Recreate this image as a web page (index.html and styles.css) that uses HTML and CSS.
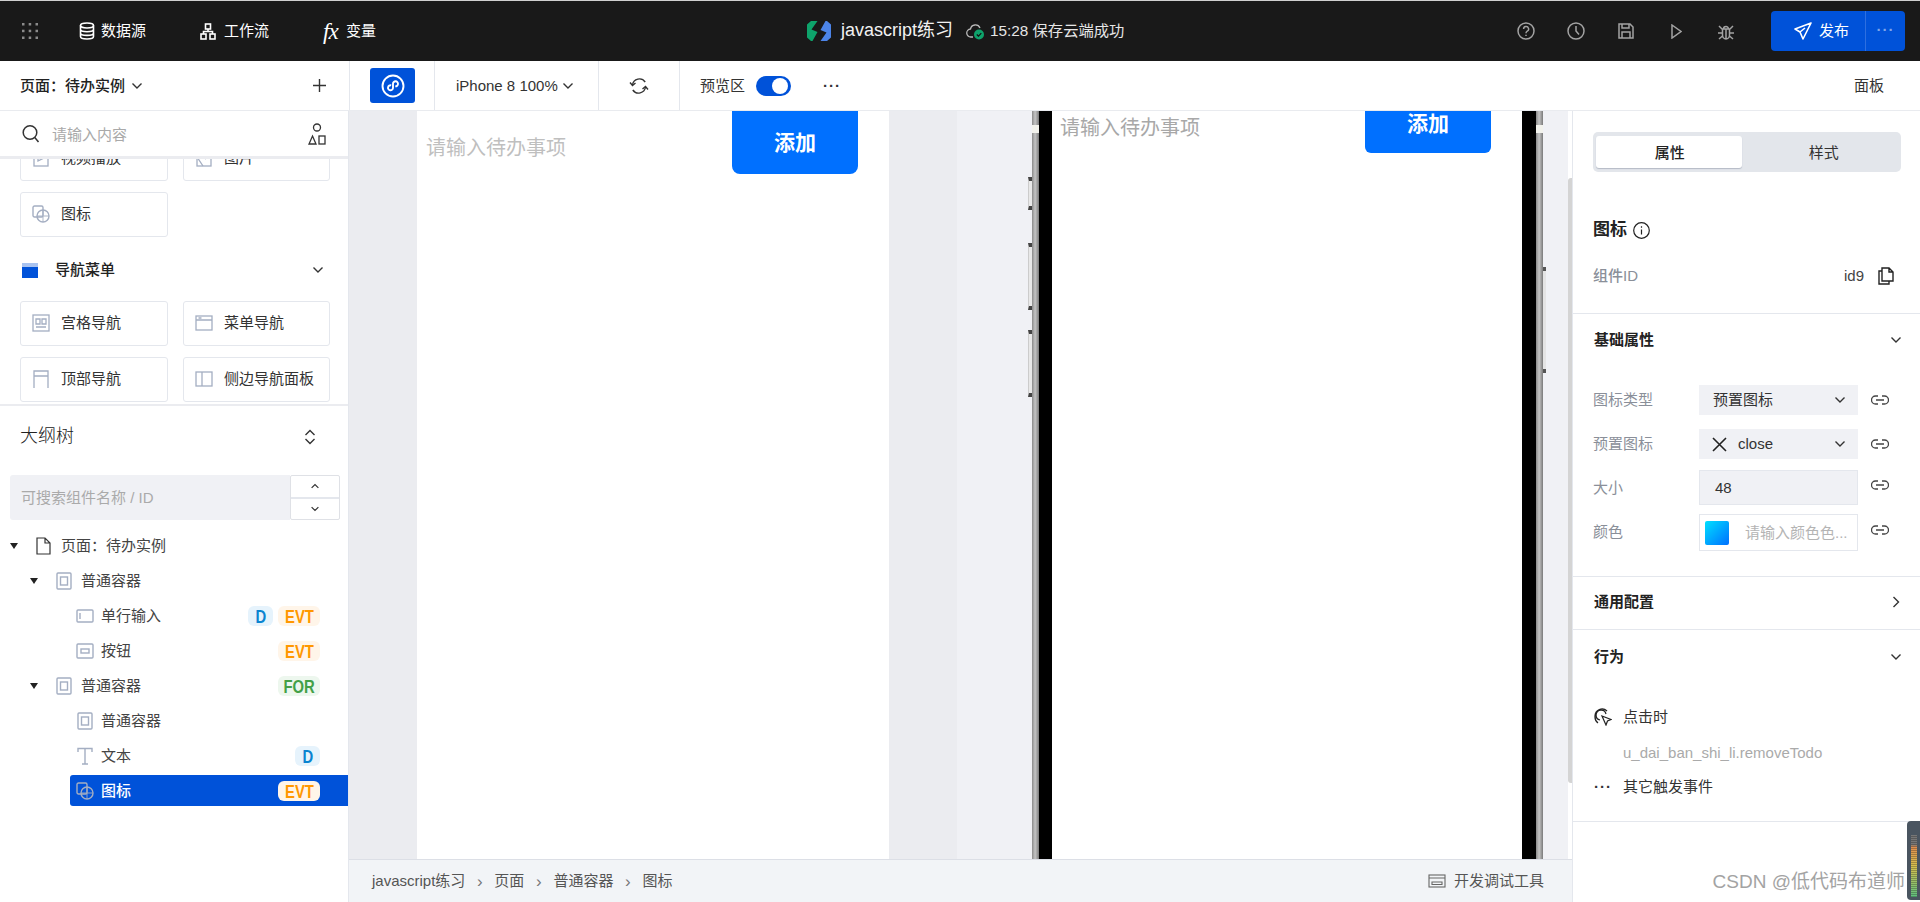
FILE: index.html
```html
<!DOCTYPE html>
<html>
<head>
<meta charset="utf-8">
<title>javascript练习</title>
<link rel="stylesheet" href="styles.css">
</head>
<body>
<svg class="sprite" width="0" height="0">
<symbol id="i-box" viewBox="0 0 16 18"><rect x="1" y="1" width="14" height="16" rx="1"/><rect x="4.5" y="5" width="7" height="8"/></symbol>
<symbol id="i-icon" viewBox="0 0 18 18"><rect x="1" y="1" width="10" height="11" rx="1.5"/><circle cx="11" cy="11" r="6"/><path d="M5 11h12M11 5v12" opacity=".6"/></symbol>
<symbol id="i-input" viewBox="0 0 18 14"><rect x="1" y="1" width="16" height="12" rx="1"/><path d="M4 4v6"/></symbol>
<symbol id="i-btn" viewBox="0 0 18 16"><rect x="1" y="1" width="16" height="14" rx="1"/><rect x="5" y="6" width="8" height="4"/></symbol>
<symbol id="i-text" viewBox="0 0 18 18"><path d="M2 5V1.500h14V5M9 1.500V17M6 17h6"/></symbol>
<symbol id="i-link" viewBox="0 0 18 10"><path d="M7 1H4.500a4 4 0 0 0 0 8H7M11 1h2.500a4 4 0 0 1 0 8H11M5 5h8"/></symbol>
<symbol id="i-down" viewBox="0 0 12 8"><path d="M1.500 1.500 6 6l4.500-4.500"/></symbol>
</svg>

<header class="topbar">
  <div class="top-left">
    <svg class="grid-ic" width="16" height="16" viewBox="0 0 16 16" fill="#8a8a8a"><rect x="0" y="0" width="2.500" height="2.500"/><rect x="6.700" y="0" width="2.500" height="2.500"/><rect x="13.500" y="0" width="2.500" height="2.500"/><rect x="0" y="6.700" width="2.500" height="2.500"/><rect x="6.700" y="6.700" width="2.500" height="2.500"/><rect x="13.500" y="6.700" width="2.500" height="2.500"/><rect x="0" y="13.500" width="2.500" height="2.500"/><rect x="6.700" y="13.500" width="2.500" height="2.500"/><rect x="13.500" y="13.500" width="2.500" height="2.500"/></svg>
    <a class="nav nav-data"><svg width="16" height="18" viewBox="0 0 16 18" fill="none" stroke="#fff" stroke-width="1.600"><ellipse cx="8" cy="3.500" rx="6.500" ry="2.500"/><path d="M1.500 3.500v11c0 1.400 2.900 2.500 6.500 2.500s6.500-1.100 6.500-2.500v-11M1.500 7.200c0 1.400 2.900 2.500 6.500 2.500s6.500-1.100 6.500-2.500M1.500 10.900c0 1.400 2.900 2.500 6.500 2.500s6.500-1.100 6.500-2.500"/></svg>数据源</a>
    <a class="nav nav-flow"><svg width="16" height="17" viewBox="0 0 16 17" fill="none" stroke="#fff" stroke-width="1.600"><rect x="5.500" y="1" width="5" height="5"/><rect x="1" y="11" width="5" height="5"/><rect x="10" y="11" width="5" height="5"/><path d="M8 6v2.500M3.500 11V8.500h9V11"/></svg>工作流</a>
    <a class="nav nav-var"><i class="fx">fx</i>变量</a>
  </div>
  <div class="top-center">
    <svg class="logo" width="24" height="20" viewBox="0 0 24 20"><path d="M4 0h6.500L4.500 8.500l6 2.500-5 9H4l-4-3.500V3.500z" fill="#0ea36b"/><path d="M20 20h-6.500l6-8.500-6-2.500 5-9H20l4 3.500v13z" fill="#4c84e8"/></svg>
    <span class="app-name">javascript练习</span>
    <svg class="cloud" width="18" height="19" viewBox="0 0 18 19" fill="none"><path d="M7 16H5a4 4 0 0 1-.5-8A5 5 0 0 1 14 7" stroke="#bbb" stroke-width="1.300"/><circle cx="13" cy="13.500" r="5" fill="#0ea36b"/><path d="M10.800 13.500l1.700 1.700 2.800-3" stroke="#111" stroke-width="1.200"/></svg>
    <span class="save-state">15:28 保存云端成功</span>
  </div>
  <div class="top-right">
    <span class="act"><svg width="18" height="18" viewBox="0 0 18 18" fill="none" stroke="#a3a3a3" stroke-width="1.500"><circle cx="9" cy="9" r="8"/><path d="M6.600 7a2.500 2.500 0 1 1 3.700 2.200c-.9.500-1.300 1-1.300 2"/><path d="M9 12.700v1.300"/></svg></span>
    <span class="act"><svg width="18" height="18" viewBox="0 0 18 18" fill="none" stroke="#a3a3a3" stroke-width="1.500"><circle cx="9" cy="9" r="8"/><path d="M9 4v5l3 3.500"/></svg></span>
    <span class="act"><svg width="16" height="16" viewBox="0 0 16 16" fill="none" stroke="#a3a3a3" stroke-width="1.500"><path d="M1 1h11l3 3v11H1z"/><path d="M4 1v4h7V1M4 15V9h8v6"/></svg></span>
    <span class="act"><svg width="11" height="15" viewBox="0 0 11 15" fill="none" stroke="#a3a3a3" stroke-width="1.500"><path d="M1 1l9 6.500L1 14z"/></svg></span>
    <span class="act"><svg width="16" height="17" viewBox="0 0 16 17" fill="none" stroke="#a3a3a3" stroke-width="1.500"><path d="M4.500 6h7v6a3.500 4 0 0 1-7 0zM5.500 6a2.500 2.500 0 0 1 5 0M8 6v10M1 3l3.500 3.500M15 3l-3.500 3.500M0 10h4.500M16 10h-4.500M1 16l3.500-3M15 16l-3.500-3"/></svg></span>
    <div class="publish">
      <a class="pub-main"><svg width="18" height="18" viewBox="0 0 18 18" fill="none" stroke="#fff" stroke-width="1.600" stroke-linejoin="round"><path d="M17 1 1 7l5 3 3 7zM6 10l5-4"/></svg>发布</a>
      <a class="pub-more">···</a>
    </div>
  </div>
</header>

<div class="toolbar">
  <div class="tb-page">
    <strong>页面：待办实例</strong>
    <svg class="chev" width="12" height="8"><use href="#i-down"/></svg>
    <svg class="plus" width="13" height="13" viewBox="0 0 13 13"><path d="M6.500 0v13M0 6.500h13"/></svg>
  </div>
  <div class="tb-cell tb-mini">
    <span class="mini-btn"><svg width="24" height="24" viewBox="0 0 24 24" fill="none" stroke="#fff" stroke-width="1.900"><circle cx="12" cy="12" r="10.500"/><path d="M10.200 11.400a2.500 2.500 0 1 0 1.800 2.400V9.800a2.500 2.500 0 1 1 2.300 2.500"/></svg></span>
  </div>
  <div class="tb-cell tb-device">iPhone 8 100%<svg class="chev" width="12" height="8"><use href="#i-down"/></svg></div>
  <div class="tb-cell tb-refresh"><svg width="20" height="18" viewBox="0 0 20 18" fill="none" stroke="#333" stroke-width="1.400"><path d="M3.500 8A7 7 0 0 1 16.200 5M16.500 10A7 7 0 0 1 3.800 13"/><path d="M1 5.500l2.500 3L6.500 6M19 12.500l-2.500-3L13.500 12"/></svg></div>
  <div class="tb-preview">预览区<span class="toggle"></span><span class="more">···</span></div>
  <div class="tb-panel">面板</div>
</div>

<div class="work">
  <aside class="left">
    <div class="search">
      <svg width="18" height="20" viewBox="0 0 18 20" fill="none" stroke="#333" stroke-width="1.500"><circle cx="8" cy="8.500" r="6.800"/><path d="M12.800 13.500 16.500 18"/></svg>
      <span class="ph">请输入内容</span>
      <svg class="shapes" width="18" height="22" viewBox="0 0 18 22" fill="none" stroke="#333" stroke-width="1.300"><circle cx="9" cy="4.500" r="3.500"/><path d="M4.500 13 8 21H1z"/><rect x="11" y="13" width="6" height="8"/></svg>
    </div>
    <div class="palette">
      <div class="cards cards-top">
        <a class="card"><svg class="cic" width="16" height="18" viewBox="0 0 16 18"><rect x="1" y="1" width="14" height="16"/><path d="M5 6l6 3-6 3z"/></svg>视频播放</a>
        <a class="card"><svg class="cic" width="16" height="18" viewBox="0 0 16 18"><rect x="1" y="1" width="14" height="16"/><path d="M1 8l6 9M9 10l6-4"/></svg>图片</a>
        <a class="card"><svg class="cic" width="18" height="18"><use href="#i-icon"/></svg>图标</a>
      </div>
      <div class="group"><span class="group-ic"></span><strong>导航菜单</strong><svg class="chev" width="12" height="8"><use href="#i-down"/></svg></div>
      <div class="cards">
        <a class="card"><svg class="cic" width="18" height="18" viewBox="0 0 18 18"><rect x="1" y="1" width="16" height="16"/><path d="M4 5h4v5H4zM10 5h4v5h-4zM4 13h10"/></svg>宫格导航</a>
        <a class="card"><svg class="cic" width="18" height="16" viewBox="0 0 18 16"><rect x="1" y="1" width="16" height="14"/><path d="M1 5h16M3.500 3h3"/></svg>菜单导航</a>
        <a class="card"><svg class="cic" width="16" height="18" viewBox="0 0 16 18"><path d="M1 18V1h14v17M1 6h14"/></svg>顶部导航</a>
        <a class="card"><svg class="cic" width="18" height="16" viewBox="0 0 18 16"><rect x="1" y="1" width="16" height="14"/><path d="M7 1v14"/></svg>侧边导航面板</a>
      </div>
    </div>
    <div class="outline">
      <div class="outline-head"><span>大纲树</span>
        <svg class="updown" width="12" height="16" viewBox="0 0 12 16"><path d="M1.500 6 6 1.500 10.500 6M1.500 10 6 14.500 10.500 10"/></svg>
      </div>
      <div class="find">
        <div class="find-input">可搜索组件名称 / ID</div>
        <div class="stepper">
          <span><svg width="10" height="6" viewBox="0 0 12 8"><path d="M1.500 6.500 6 2l4.500 4.500"/></svg></span>
          <span><svg width="10" height="6"  viewBox="0 0 12 8"><path d="M1.500 1.500 6 6l4.500-4.500"/></svg></span>
        </div>
      </div>
      <div class="tree">
        <div class="row l0"><i class="caret"></i><svg class="ic doc" width="15" height="18" viewBox="0 0 15 18"><path d="M1 1h8l5 5v11H1zM9 1v5h5"/></svg>页面：待办实例</div>
        <div class="row l1"><i class="caret"></i><svg class="ic" width="16" height="18"><use href="#i-box"/></svg>普通容器</div>
        <div class="row l2"><svg class="ic" width="18" height="14"><use href="#i-input"/></svg>单行输入<span class="tags"><b class="tag d"><span>D</span></b><b class="tag evt"><span>EVT</span></b></span></div>
        <div class="row l2"><svg class="ic" width="18" height="16"><use href="#i-btn"/></svg>按钮<span class="tags"><b class="tag evt"><span>EVT</span></b></span></div>
        <div class="row l1"><i class="caret"></i><svg class="ic" width="16" height="18"><use href="#i-box"/></svg>普通容器<span class="tags"><b class="tag for"><span>FOR</span></b></span></div>
        <div class="row l2"><svg class="ic" width="16" height="18"><use href="#i-box"/></svg>普通容器</div>
        <div class="row l2"><svg class="ic" width="18" height="18"><use href="#i-text"/></svg>文本<span class="tags"><b class="tag d"><span>D</span></b></span></div>
        <div class="row l2 sel"><svg class="ic" width="18" height="18"><use href="#i-icon"/></svg>图标<span class="tags"><b class="tag evt"><span>EVT</span></b></span></div>
      </div>
    </div>
  </aside>

  <main class="center">
    <div class="canvas">
      <div class="gut gut-a"></div>
      <div class="screen screen-a">
        <span class="todo-ph">请输入待办事项</span>
        <a class="add">添加</a>
      </div>
      <div class="gut gut-a gut-b"></div>
      <div class="gut gut-c"></div>
      <div class="keys keys-l"><i></i><i></i><i></i></div>
      <div class="bezel"><span class="glint"></span></div>
      <div class="black"></div>
      <div class="screen screen-b">
        <span class="todo-ph dim">请输入待办事项</span>
        <a class="add add-b">添加</a>
      </div>
      <div class="black black-r"></div>
      <div class="bezel bezel-r"><span class="glint"></span></div>
      <div class="keys keys-r"><i></i></div>
      <div class="gut gut-d"></div>
      <div class="scroll"><i></i></div>
    </div>
    <footer class="crumbs">
      <span class="cr">javascript练习</span><em>›</em><span class="cr">页面</span><em>›</em><span class="cr">普通容器</span><em>›</em><span class="cr">图标</span>
      <span class="devtool"><svg width="18" height="14" viewBox="0 0 18 14" fill="none" stroke="#666" stroke-width="1.100"><rect x="1" y="1" width="16" height="12"/><path d="M1 4h16M4 8h10v2.500H4z"/></svg>开发调试工具</span>
    </footer>
  </main>

  <aside class="props">
    <div class="tabs"><span class="tab on">属性</span><span class="tab">样式</span></div>
    <div class="title"><strong>图标</strong><svg width="17" height="17" viewBox="0 0 17 17" fill="none" stroke="#222" stroke-width="1.200"><circle cx="8.500" cy="8.500" r="7.800"/><path d="M8.500 7.500v5M8.500 4.300v1.500"/></svg></div>
    <div class="comp-id"><span class="muted">组件ID</span><span class="id">id9</span>
      <svg width="16" height="18" viewBox="0 0 16 18" fill="none" stroke="#222" stroke-width="1.400"><path d="M4 1h7l4 4v9H4zM11 1v4h4M4 4H1v13h10v-3"/></svg>
    </div>
    <div class="sec-head sec-line"><strong>基础属性</strong><svg class="chev" width="12" height="8"><use href="#i-down"/></svg></div>
    <div class="form">
      <div class="prow r-a"><label>图标类型</label><div class="ctl"><span>预置图标</span><svg class="chev" width="12" height="8"><use href="#i-down"/></svg></div><svg class="link" width="18" height="10"><use href="#i-link"/></svg></div>
      <div class="prow r-b"><label>预置图标</label><div class="ctl"><svg class="x" width="15" height="15" viewBox="0 0 15 15"><path d="M1 1l13 13M14 1 1 14"/></svg><span>close</span><svg class="chev" width="12" height="8"><use href="#i-down"/></svg></div><svg class="link" width="18" height="10"><use href="#i-link"/></svg></div>
      <div class="prow r-c"><label>大小</label><div class="ctl num"><span>48</span></div><svg class="link" width="18" height="10"><use href="#i-link"/></svg></div>
      <div class="prow r-d"><label>颜色</label><div class="ctl color"><i class="swatch"></i><span>请输入颜色色...</span></div><svg class="link" width="18" height="10"><use href="#i-link"/></svg></div>
    </div>
    <div class="sec-head sec-line sec-top"><strong>通用配置</strong><svg class="chev right" width="8" height="12" viewBox="0 0 8 12"><path d="M1.500 1 6.500 6l-5 5"/></svg></div>
    <div class="sec-head sec-act"><strong>行为</strong><svg class="chev" width="12" height="8"><use href="#i-down"/></svg></div>
    <div class="behave">
      <div class="ev"><svg width="18" height="18" viewBox="0 0 18 18" fill="none" stroke="#222" stroke-width="1.200"><path d="M8 8l9 3.500-3.500 1.500L12 17z"/><path d="M6 12a5 5 0 1 1 6-6M4 15A8 8 0 0 1 1 8a7 7 0 0 1 12-5"/></svg><span>点击时</span></div>
      <div class="ev-fn">u_dai_ban_shi_li.removeTodo</div>
      <div class="ev"><span class="ev-dots">···</span><span>其它触发事件</span></div>
    </div>
  </aside>
</div>

<div class="watermark">CSDN @低代码布道师</div>
<div class="meter"><i></i></div>
</body>
</html>
```

FILE: styles.css
```css
*{box-sizing:border-box;}
html,body{margin:0;padding:0;height:100%;}
body{
width:1920px;
height:902px;
overflow:hidden;
position:relative;
background:#fff;
color:#333;
font:15px/1.3 "Liberation Sans","Noto Sans CJK SC",sans-serif;
}
a{text-decoration:none;color:inherit;}
i,em{font-style:normal;}
.sprite{position:absolute;}
symbol{fill:none;stroke:#a4aec2;stroke-width:1.400;}
symbol#i-link{stroke:#444;stroke-width:1.300;}
symbol#i-down{stroke:#333;stroke-width:1.400;}

/* top bar */
.topbar{
height:61px;
border-top:1px solid #d0d0d0;
background:#191919;
color:#fff;
display:flex;
align-items:center;
}
.top-left{width:807px;display:flex;align-items:center;padding-left:22px;}
.nav{display:flex;align-items:center;gap:6px;}
.nav-data{margin-left:41px;}
.nav-flow{margin-left:54px;gap:8px;}
.nav-var{margin-left:54px;gap:7px;}
.fx{font:italic 23px/1 "Liberation Serif",serif;letter-spacing:-1px;width:16px;}
.top-center{display:flex;align-items:center;}
.app-name{font-size:18px;margin-left:10px;color:#f2f2f2;}
.cloud{margin-left:13px;}
.save-state{margin-left:6px;color:#e6e6e6;font-size:15.300px;}
.top-right{margin-left:auto;display:flex;align-items:center;}
.act{width:50px;display:flex;justify-content:center;}
.publish{
width:134px;
height:40px;
margin-right:15px;
margin-left:20px;
display:flex;
border-radius:4px;
background:#0052d9;
overflow:hidden;
}
.pub-main{width:95px;padding-left:7px;display:flex;align-items:center;justify-content:center;gap:7px;border-right:1px solid #2e6fe0;}
.pub-more{flex:1;text-align:center;line-height:38px;color:#7fa6ea;font-weight:bold;letter-spacing:1px;}

/* second bar */
.toolbar{height:50px;display:flex;align-items:center;border-bottom:1px solid #e9ebef;}
.tb-page{width:350px;height:100%;padding:0 23px 0 20px;display:flex;align-items:center;border-right:1px solid #e4e7ed;}
.tb-page strong{font-size:15px;font-weight:500;color:#222;}
.chev{fill:none;stroke:#333;stroke-width:1.400;}
.tb-page .chev{margin-left:6px;}
.plus{margin-left:auto;fill:none;stroke:#333;stroke-width:1.400;}
.tb-cell{height:100%;display:flex;align-items:center;border-right:1px solid #e4e7ed;}
.tb-mini{width:85px;padding-left:20px;}
.mini-btn{width:45px;height:35px;background:#0052d9;border-radius:3px;display:flex;align-items:center;justify-content:center;}
.tb-device{width:164px;padding-left:21px;gap:4px;}
.tb-refresh{width:81px;justify-content:center;}
.tb-preview{margin-left:20px;display:flex;align-items:center;}
.toggle{width:35px;height:20px;margin-left:11px;border-radius:10px;background:#0052d9;position:relative;}
.toggle:after{content:"";position:absolute;right:3px;top:2px;width:16px;height:16px;border-radius:50%;background:#fff;}
.more{margin-left:32px;font-weight:bold;letter-spacing:1px;}
.tb-panel{margin-left:auto;margin-right:36px;}

/* main area */
.work{height:791px;display:flex;}
.left{width:349px;border-right:1px solid #e4e7ed;flex:none;}
.search{height:48px;padding:0 22px 0 22px;display:flex;align-items:center;border-bottom:3px solid #ebecf0;}
.ph{margin-left:12px;margin-top:2px;color:#a9a9a9;}
.shapes{margin-left:auto;}
.palette{height:245px;overflow:hidden;padding:0 19px 0 20px;}
.cards{display:grid;grid-template-columns:148px 147px;column-gap:15px;row-gap:11px;}
.cards-top{margin-top:-23px;}
.card{height:45px;border:1px solid #e4e7ed;border-radius:3px;display:flex;align-items:center;padding:0 0 2px 11px;color:#333;}
.cic{width:18px;margin-right:11px;fill:none;stroke:#a4aec2;stroke-width:1.300;}
.group{height:64px;padding-top:2px;display:flex;align-items:center;}
.group strong{font-weight:500;color:#222;margin-left:17px;}
.group .chev{margin-left:auto;margin-right:5px;}
.group-ic{width:16px;height:15px;background:#0052d9;border-top:4px solid #a9c3f0;display:block;margin-left:2px;}

.outline{border-top:2px solid #ebecf0;}
.outline-head{height:62px;padding:0 32px 0 20px;display:flex;align-items:center;justify-content:space-between;font-size:18px;font-weight:300;color:#222;}
.updown{fill:none;stroke:#333;stroke-width:1.400;}
.find{margin:7px 8px 0 10px;display:flex;height:45px;}
.find-input{width:280px;background:#f0f1f5;border-radius:3px 0 0 3px;padding-left:11px;line-height:45px;color:#aaa;}
.stepper{flex:1;border:1px solid #dfe1e6;border-radius:2px;display:flex;flex-direction:column;}
.stepper span{flex:1;display:flex;align-items:center;justify-content:center;}
.stepper span + span{border-top:2px solid #e4e7ed;}
.stepper svg{fill:none;stroke:#333;stroke-width:1.600;}
.tree{margin-top:8px;}
.row{height:35px;display:flex;align-items:center;padding-right:28px;color:#444;}
.l0{padding-left:10px;}
.l1{padding-left:30px;}
.l2{padding-left:76px;}
.caret{width:0;height:0;border:4.500px solid transparent;border-top:6px solid #222;border-bottom:0;margin-right:18px;}
.ic{margin-right:9px;flex:none;}
.l2 .ic{width:18px;margin-right:7px;}
.doc{fill:none;stroke:#333;stroke-width:1.200;margin-right:10px;}
.tags{margin-left:auto;display:flex;gap:5px;}
.tag{height:20px;border-radius:6px;display:flex;justify-content:center;font:bold 19px/21px "Liberation Sans",sans-serif;}
.tag span{display:block;transform:scaleX(.78);}
.tag.d{width:25px;background:#e6f3fc;color:#0a84d0;}
.tag.evt{width:42px;background:#fff5e9;color:#ff9800;}
.tag.for{width:42px;background:#edf7ee;color:#43a047;}
.row.sel{
height:31px;
margin:2px 0;
margin-left:70px;
padding-left:6px;
background:#0052d9;
border-radius:3px 0 0 3px;
color:#fff;
font-weight:500;
}

.center{width:1223px;display:flex;flex-direction:column;}
.canvas{height:748px;display:flex;overflow:hidden;}
.gut{background:#f0f1f5;flex:none;}
.gut-a{width:68px;background:#ebecf0;}
.gut-c{width:71px;}
.gut-d{width:22px;}
.screen{background:#fff;display:flex;align-items:flex-start;flex:none;}
.screen-a{width:472px;padding:24px 31px 0 9px;}
.screen-b{width:470px;padding:4px 31px 0 8px;}
.todo-ph{font-size:20px;color:#bfbfbf;}
.todo-ph.dim{color:#a8a8a8;}
.add{
margin-left:auto;
margin-top:-24px;
width:126px;
height:63px;
background:#0070ff;
border-radius:0 0 8px 8px;
color:#fff;
font-size:21px;
font-weight:bold;
display:flex;
align-items:center;
justify-content:center;
}
.add-b{margin-top:-4px;height:42px;border-radius:0 0 6px 6px;align-items:flex-start;line-height:26px;}
.keys{width:4px;background:#f0f1f5;flex:none;display:flex;flex-direction:column;}
.keys i{display:block;background:#e8e8e8;border-left:1px solid #ccc;border-top:4px solid #444;border-bottom:4px solid #444;margin-bottom:33px;}
.keys-l{padding-top:66px;}
.keys-l i{height:33px;}
.keys-l i + i{height:67px;margin-bottom:20px;}
.keys-r{width:3px;padding-top:156px;}
.keys-r i{height:106px;background:#e4e4e4;border-left:0;border-top:4px solid #555;border-bottom:4px solid #555;}
.bezel{width:7px;background:linear-gradient(90deg,#8a8a8a,#c4c4c4 45%,#7a7a7a);padding-top:14px;flex:none;}
.glint{display:block;height:8px;background:#f2f2ec;}
.black{width:13px;background:#000;flex:none;}
.black-r{width:14px;}
.scroll{width:7px;background:#fff;flex:none;padding-top:67px;}
.scroll i{display:block;width:6px;height:605px;background:#d4d4d4;border-radius:3px;}
.crumbs{height:43px;background:#f2f4f7;border-top:1px solid #dcdfe6;display:flex;align-items:center;padding:0 28px 0 23px;color:#555;}
.crumbs em{width:29px;text-align:center;color:#777;font-size:17px;line-height:1;}
.devtool{margin-left:auto;display:flex;align-items:center;gap:8px;}

/* right panel */
.props{width:348px;border-left:1px solid #e4e7ed;flex:none;}
.tabs{margin:21px 19px 0 20px;height:40px;padding:4px 3px;background:#e3e6eb;border-radius:5px;display:flex;}
.tab{width:158px;padding-left:8px;text-align:center;line-height:33px;color:#333;}
.tab.on{width:147px;padding-left:2px;background:#fff;border-radius:3px;box-shadow:0 1px 1px #b4bac6;font-weight:500;color:#222;}
.title{margin:46px 0 0 20px;height:24px;display:flex;align-items:center;gap:6px;}
.title strong{font-size:17px;color:#222;}
.comp-id{margin-top:22px;padding:0 26px 0 20px;height:24px;display:flex;align-items:center;}
.muted{color:#8a8f99;font-weight:500;flex:1;}
.id{margin-right:14px;color:#444;}
.sec-head{height:52px;padding:0 18px 0 21px;display:flex;align-items:center;justify-content:space-between;}
.sec-head strong{color:#222;font-size:15px;}
.sec-line{border-bottom:1px solid #e4e7ed;height:53px;}
.comp-id + .sec-head{border-top:1px solid #e4e7ed;border-bottom:0;margin-top:25px;}
.sec-top{border-top:1px solid #e4e7ed;height:54px;padding-bottom:2px;}
.sec-act{height:53px;padding-top:1px;}
.chev.right{stroke:#333;margin-right:2px;}
.form{padding:19px 0 25px 20px;}
.prow{display:flex;align-items:center;}
.prow label{width:106px;color:#8a8f99;}
.ctl{width:159px;height:30px;background:#f0f1f5;display:flex;align-items:center;padding:0 12px 0 14px;color:#333;}
.ctl .chev{margin-left:auto;}
.x{fill:none;stroke:#222;stroke-width:1.600;margin-right:11px;margin-left:-1px;}
.link{margin-left:13px;}
.r-a{margin-bottom:14px;}
.r-b{margin-bottom:11px;}
.r-c{margin-bottom:9px;}
.r-c .ctl{height:35px;border:1px solid #e4e7ed;padding-left:15px;}
.r-c .link,.r-d .link{margin-top:-6px;}
.r-d label{margin-top:-2px;}
.r-d .ctl{height:37px;background:#fff;border:1px solid #e4e7ed;padding:0 5px;}
.swatch{width:24px;height:24px;border-radius:2px;background:linear-gradient(135deg,#00e0ff,#0070ff);margin-right:16px;flex:none;}
.r-d .ctl span{color:#b4b4b4;white-space:nowrap;}
.behave{padding:22px 0 22px 21px;border-bottom:1px solid #e4e7ed;}
.ev{height:24px;display:flex;align-items:center;color:#333;}
.ev span:last-child{margin-left:11px;}
.ev svg{flex:none;}
.ev-dots{width:18px;font-weight:bold;letter-spacing:1px;}
.ev-fn{margin:12px 0 10px 29px;height:24px;line-height:24px;color:#aaa;}

/* overlays */
.watermark{position:absolute;right:15px;bottom:7px;font-size:19px;color:#a3a3a3;}
.meter{
position:absolute;
right:0;
bottom:2px;
width:13px;
height:79px;
background:#4a5560;
border-radius:4px 0 0 4px;
padding:14px 3px 3px 4px;
}
.meter i{display:block;height:100%;background:repeating-linear-gradient(180deg,transparent 0 1px,rgba(0,0,0,.25) 1px 2px),linear-gradient(180deg,#777 0,#777 15%,#e09050 20%,#d8c050 50%,#60c080 100%);}
```
